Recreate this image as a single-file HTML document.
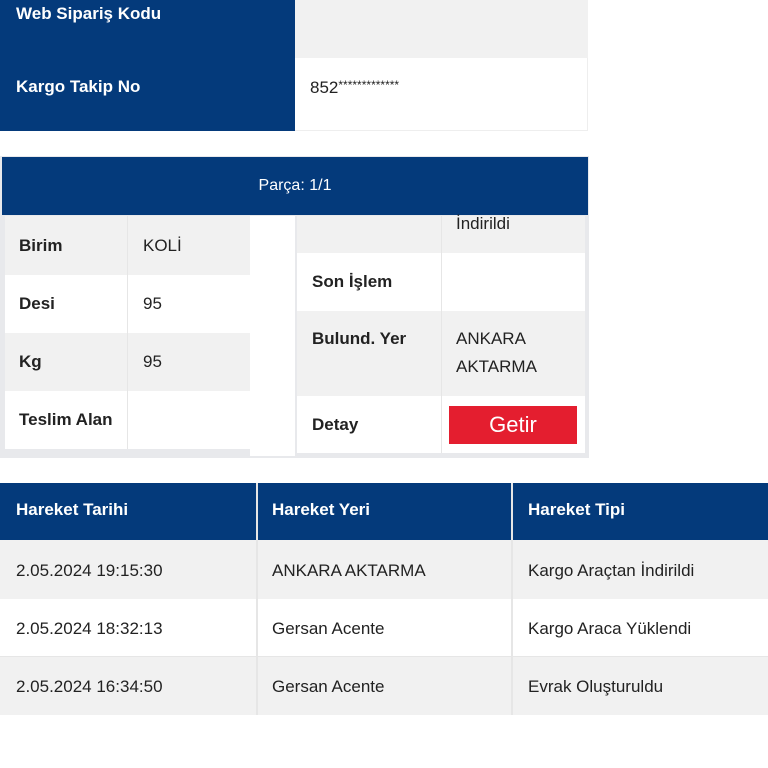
<!DOCTYPE html>
<html><head><meta charset="utf-8"><style>
*{margin:0;padding:0;box-sizing:border-box}
body{width:768px;height:768px;background:#fff;font-family:"Liberation Sans",sans-serif;position:relative;overflow:hidden;color:#222}
.a{position:absolute}
.nv{background:#043a7b;color:#fff}
.g{background:#f1f1f1}
.w{background:#fff}
.b{font-weight:bold}
.t{font-size:17px;position:absolute}
</style></head><body>
<div class="a nv" style="left:0;top:0;width:295px;height:131px"></div>
<div class="t b" style="left:16px;top:4px;color:#fff">Web Sipariş Kodu</div>
<div class="t b" style="left:16px;top:77px;color:#fff">Kargo Takip No</div>
<div class="a g" style="left:295px;top:0;width:293px;height:58px"></div>
<div class="a w" style="left:295px;top:58px;width:293px;height:73px;border-right:1px solid #eee;border-bottom:1px solid #eee"></div>
<div class="t" style="left:310px;top:78px">852<span style="font-size:12px;vertical-align:4px">*************</span></div>

<div class="a" style="left:0;top:156px;width:589px;height:302px;background:#e8e9ec"></div>
<div class="a nv" style="left:2px;top:157px;width:586px;height:58px;text-align:center;line-height:58px;font-size:16px">Parça: 1/1</div>
<div class="a" style="left:250px;top:216px;width:45px;height:240px;background:#fff"></div>
<div class="a g" style="left:5px;top:216px;width:245px;height:59px"></div>
<div class="a w" style="left:5px;top:275px;width:245px;height:58px"></div>
<div class="a g" style="left:5px;top:333px;width:245px;height:58px"></div>
<div class="a w" style="left:5px;top:391px;width:245px;height:58px"></div>
<div class="a" style="left:127px;top:216px;width:1px;height:233px;background:#e6e6e6"></div>
<div class="t b" style="left:19px;top:236px">Birim</div><div class="t" style="left:143px;top:236px">KOLİ</div>
<div class="t b" style="left:19px;top:294px">Desi</div><div class="t" style="left:143px;top:294px">95</div>
<div class="t b" style="left:19px;top:352px">Kg</div><div class="t" style="left:143px;top:352px">95</div>
<div class="t b" style="left:19px;top:410px">Teslim Alan</div>

<div class="a g" style="left:297px;top:216px;width:288px;height:37px"></div>
<div class="a w" style="left:297px;top:253px;width:288px;height:58px"></div>
<div class="a g" style="left:297px;top:311px;width:288px;height:85px"></div>
<div class="a w" style="left:297px;top:396px;width:288px;height:57px"></div>
<div class="a" style="left:441px;top:216px;width:1px;height:237px;background:#e6e6e6"></div>
<div class="t" style="left:456px;top:214px">İndirildi</div>
<div class="t b" style="left:312px;top:272px">Son İşlem</div>
<div class="t b" style="left:312px;top:329px">Bulund. Yer</div>
<div class="t" style="left:456px;top:329px;line-height:28px;top:325px">ANKARA<br>AKTARMA</div>
<div class="t b" style="left:312px;top:415px">Detay</div>
<div class="a" style="left:449px;top:406px;width:128px;height:38px;background:#e41e2f;color:#fff;font-size:22px;text-align:center;line-height:38px">Getir</div>

<div class="a nv" style="left:0;top:483px;width:768px;height:57px"></div>
<div class="a g" style="left:0;top:540px;width:768px;height:59px"></div>
<div class="a w" style="left:0;top:599px;width:768px;height:58px;border-bottom:1px solid #e6e6e6"></div>
<div class="a g" style="left:0;top:657px;width:768px;height:58px"></div>
<div class="a" style="left:256px;top:483px;width:2px;height:232px;background:#e6e6e6"></div>
<div class="a" style="left:511px;top:483px;width:2px;height:232px;background:#e6e6e6"></div>
<div class="t b" style="left:16px;top:500px;color:#fff">Hareket Tarihi</div>
<div class="t b" style="left:272px;top:500px;color:#fff">Hareket Yeri</div>
<div class="t b" style="left:528px;top:500px;color:#fff">Hareket Tipi</div>
<div class="t" style="left:16px;top:561px">2.05.2024 19:15:30</div>
<div class="t" style="left:272px;top:561px">ANKARA AKTARMA</div>
<div class="t" style="left:528px;top:561px">Kargo Araçtan İndirildi</div>
<div class="t" style="left:16px;top:619px">2.05.2024 18:32:13</div>
<div class="t" style="left:272px;top:619px">Gersan Acente</div>
<div class="t" style="left:528px;top:619px">Kargo Araca Yüklendi</div>
<div class="t" style="left:16px;top:677px">2.05.2024 16:34:50</div>
<div class="t" style="left:272px;top:677px">Gersan Acente</div>
<div class="t" style="left:528px;top:677px">Evrak Oluşturuldu</div>
</body></html>
